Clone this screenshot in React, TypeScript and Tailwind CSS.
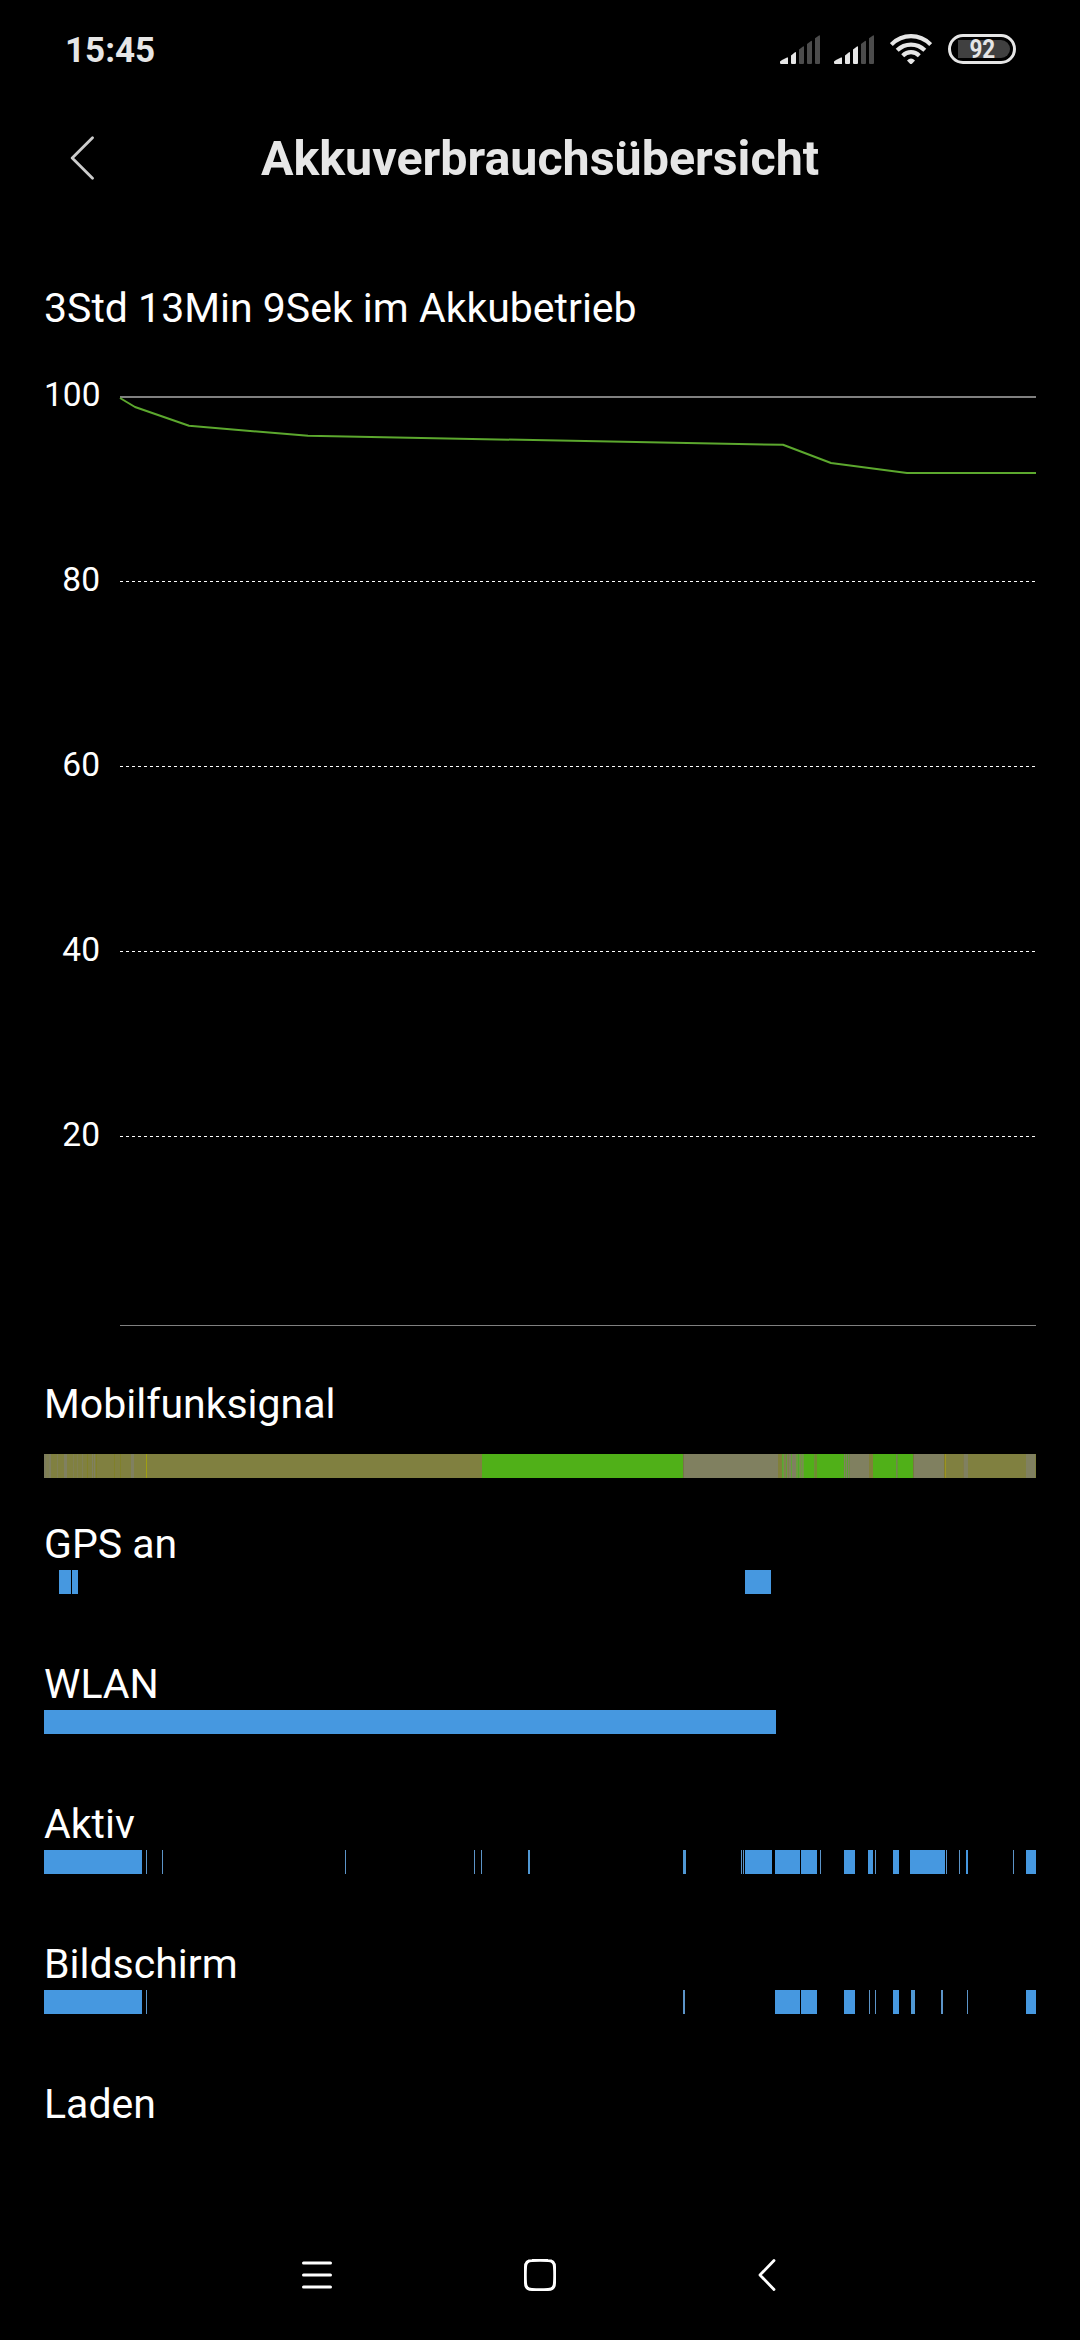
import React from "react";

const BLUE = "#4698e0";
const THIN = "#5c94c8";
const OLIVE = "#808040";
const GREY = "#808060";
const GREEN = "#50b018";
const MIX = "#6c9c3e";
const BROWN = "#80803a";

type Segment = [start: number, end: number, color?: string];

const signal: Segment[] = [
  [44, 482, OLIVE],
  [44, 46, "#7c7c5c"], [46, 49, "#808054"], [49, 51, GREY], [57, 58, "#808056"], [64, 67, GREY],
  [73, 74, "#808052"], [77, 78, "#808052"], [82, 83, "#808056"], [87, 88, "#80802a"],
  [92, 93, GREY], [94, 95, GREY], [96, 97, "#80802c"], [114, 115, "#80802a"], [120, 121, "#80802a"],
  [131, 134, GREY], [146, 147, "#a0a010"],
  [482, 683, GREEN], [683, 778, GREY], [683, 684, "#747448"],
  [778, 782, BROWN], [782, 783, "#58a830"], [783, 784, MIX], [784, 786, "#808050"],
  [786, 787, "#62a030"], [787, 791, GREY], [788, 789, "#80804a"], [791, 792, "#5ea438"], [792, 796, GREY],
  [796, 804, MIX], [798, 799, "#50a82c"], [800, 801, "#7c8850"], [802, 803, "#788c50"],
  [804, 844, GREEN], [814, 815, "#6c9038"], [815, 817, "#708c30"],
  [844, 850, GREY], [845, 846, "#60a030"], [847, 848, "#58a430"], [849, 850, "#6c9040"],
  [850, 869, GREY], [869, 873, BROWN],
  [873, 913, GREEN], [896, 897, "#70884c"], [897, 898, "#649438"], [913, 914, "#747840"],
  [914, 944, GREY], [944, 945, "#807c30"], [945, 946, "#9c9420"], [946, 964, OLIVE],
  [963, 964, "#807c48"], [964, 968, GREY], [968, 1026, OLIVE], [1026, 1035, GREY], [1035, 1036, OLIVE],
];

const gps: Segment[] = [[59, 71], [72, 78], [745, 771]];
const wlan: Segment[] = [[44, 776]];

const active: Segment[] = [
  [44, 142], [146, 147, THIN], [162, 163, THIN], [345, 346, THIN], [474, 475, THIN], [481, 482, THIN],
  [528, 530, "#5098d4"], [683, 686, "#5098d4"], [741, 742, THIN], [743, 744, THIN], [745, 772],
  [775, 800], [801, 817], [820, 821, THIN], [844, 855], [868, 873], [875, 876, THIN], [893, 899],
  [910, 945], [946, 947, THIN], [959, 960, THIN], [966, 968], [1013, 1014, THIN], [1026, 1036],
];

const screen: Segment[] = [
  [44, 142], [146, 147, THIN], [683, 685, THIN], [775, 800], [801, 817], [844, 855],
  [869, 870, THIN], [875, 876, THIN], [893, 899], [911, 915, "#5098d4"], [941, 943, THIN],
  [967, 968, THIN], [1026, 1036],
];

function Track({ segments }: { segments: Segment[] }) {
  return (
    <svg className="block h-6 w-[992px]" viewBox="44 0 992 24" shapeRendering="crispEdges">
      {segments.map(([start, end, color], i) => (
        <rect key={i} x={start} y={0} width={end - start} height={24} fill={color ?? BLUE} />
      ))}
    </svg>
  );
}

function Row({ label, segments, first }: { label: string; segments: Segment[]; first?: boolean }) {
  return (
    <section className="h-[140px]">
      <h2 className={first ? "mb-6 h-[50px]" : "h-[50px]"}>{label}</h2>
      <Track segments={segments} />
    </section>
  );
}

function Signal({ strength }: { strength: number }) {
  const bars = [
    "M0 26.5L2 25L7 22.5H8V29H1.2Q0 29 0 28Z",
    "M11 20.5L15 17.3Q16 16.7 16 18V28Q16 29 15 29H12Q11 29 11 28Z",
    "M19 14.5L23 11.4Q24 10.8 24 12V28Q24 29 23 29H20Q19 29 19 28Z",
    "M27 9L31 6Q32 5.3 32 6.6V28Q32 29 31 29H28Q27 29 27 28Z",
    "M35 3.3L39 .5Q40 0 40 1.2V28Q40 29 39 29H36Q35 29 35 28Z",
  ];
  return (
    <svg className="block h-[29px] w-10" viewBox="0 0 40 29">
      {bars.map((d, i) => (
        <path key={i} d={d} fill={i < strength ? "#e6e6e6" : "#4c4c4c"} />
      ))}
    </svg>
  );
}

function StatusBar() {
  return (
    <header className="flex h-[98px] items-center pl-[65px] pr-16 text-[#e6e6e6]">
      <time className="pt-[2px] text-[35px] font-bold leading-none">15:45</time>
      <div className="ml-auto flex items-center">
        <div className="mr-3.5"><Signal strength={2} /></div>
        <div className="mr-4"><Signal strength={3} /></div>
        <svg className="mr-4 block h-[30px] w-[42px]" viewBox="0 0 42 30" fill="none" stroke="#e6e6e6" strokeWidth="4.2">
          <path d="M1.3 10.6C12.5-.6 29.5-.6 40.7 10.6" />
          <path d="M7.2 16.3C15 8.6 27 8.6 34.8 16.3" />
          <path d="M12.7 21.7C17.5 17 24.5 17 29.3 21.7" />
          <path d="M17 26.4Q21 22.6 25 26.4L22.2 29.4Q21 30.4 19.8 29.4Z" fill="#e6e6e6" stroke="none" />
        </svg>
        <div className="flex h-[30px] w-[68px] rounded-full border-[3px] border-[#e6e6e6] p-[3px] pl-[7px]">
          <div className="flex h-full w-full items-center justify-center rounded-l-[3px] rounded-r-full bg-[#404040] pr-1 text-[25px] font-bold leading-none">
            <span className="scale-x-[0.9] pt-px">92</span>
          </div>
        </div>
      </div>
    </header>
  );
}

function Chart() {
  return (
    <div className="flex h-[930px] gap-5">
      <div className="flex w-14 flex-col pt-px text-right text-[33.5px] leading-[40px]">
        {[100, 80, 60, 40, 20].map((n) => (
          <div key={n} className="h-[185px]">{n}</div>
        ))}
      </div>
      <svg className="block h-[930px] w-[916px] overflow-visible pt-[22px]" viewBox="0 0 916 930" preserveAspectRatio="xMinYMin slice">
        <rect y="0" width="916" height="2" fill="#808080" />
        {[185, 370, 555, 740].map((y) => (
          <path key={y} d={`M0 ${y + 0.5}H916`} stroke="#fff" strokeDasharray="3 3" shapeRendering="crispEdges" />
        ))}
        <rect y="929" width="916" height="1" fill="#808080" />
        <path d="M0 2L15 11L69 29.8L188 39.8L663 48.8L711 67L787 77H916" fill="none" stroke="#5ca82e" strokeWidth="2" strokeLinejoin="round" />
      </svg>
    </div>
  );
}

export default function App() {
  return (
    <div className="flex h-[2340px] w-[1080px] flex-col overflow-hidden bg-black font-['Roboto',sans-serif] text-white">
      <StatusBar />
      <div className="grid h-[120px] grid-cols-[120px_1fr_120px] items-center text-[#e6e6e6]">
        <svg className="ml-[70px] block h-11 w-6" viewBox="0 0 24 44" fill="none" stroke="#ccc" strokeWidth="2.8" strokeLinecap="round">
          <path d="M22.5 1.8L2.2 22L22.5 42.2" strokeLinejoin="round" />
        </svg>
        <h1 className="pt-[3px] text-center text-[48.4px] font-bold leading-none">Akkuverbrauchsübersicht</h1>
      </div>
      <main className="px-11 text-[41px] leading-[48px]">
        <h2 className="mt-[65px] h-[91px] leading-[50px]">3Std 13Min 9Sek im Akkubetrieb</h2>
        <Chart />
        <div className="pt-[76px]">
          <Row label="Mobilfunksignal" segments={signal} first />
          <Row label="GPS an" segments={gps} />
          <Row label="WLAN" segments={wlan} />
          <Row label="Aktiv" segments={active} />
          <Row label="Bildschirm" segments={screen} />
          <h2>Laden</h2>
        </div>
      </main>
      <nav className="mt-auto flex h-[130px] items-center pl-[302px] pr-[304px]">
        <svg className="block h-8 w-[30px]" viewBox="0 0 30 32" stroke="#fff" strokeWidth="3" strokeLinecap="round">
          <path d="M1.5 4H28.5M1.5 16H28.5M1.5 28H28.5" />
        </svg>
        <svg className="ml-[192px] block h-8 w-8" viewBox="0 0 32 32" fill="none" stroke="#fff" strokeWidth="3">
          <path d="M8 1.5Q16 1 24 1.5Q30.5 1.5 30.5 8Q31 16 30.5 24Q30.5 30.5 24 30.5Q16 31 8 30.5Q1.5 30.5 1.5 24Q1 16 1.5 8Q1.5 1.5 8 1.5Z" />
        </svg>
        <svg className="ml-auto block h-8 w-[18px]" viewBox="0 0 18 32" fill="none" stroke="#fff" strokeWidth="2.8" strokeLinecap="round" strokeLinejoin="round">
          <path d="M16 1.5L2 16L16 30.5" />
        </svg>
      </nav>
    </div>
  );
}
